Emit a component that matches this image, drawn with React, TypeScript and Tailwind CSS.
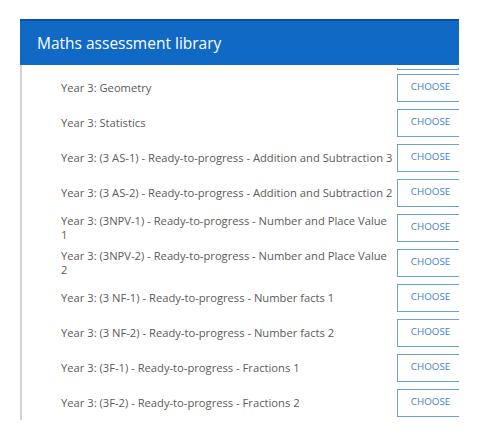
import React from "react";

const rows: string[] = [
  "Year 3: Geometry",
  "Year 3: Statistics",
  "Year 3: (3 AS-1) - Ready-to-progress - Addition and Subtraction 3",
  "Year 3: (3 AS-2) - Ready-to-progress - Addition and Subtraction 2",
  "Year 3: (3NPV-1) - Ready-to-progress - Number and Place Value 1",
  "Year 3: (3NPV-2) - Ready-to-progress - Number and Place Value 2",
  "Year 3: (3 NF-1) - Ready-to-progress - Number facts 1",
  "Year 3: (3 NF-2) - Ready-to-progress - Number facts 2",
  "Year 3: (3F-1) - Ready-to-progress - Fractions 1",
  "Year 3: (3F-2) - Ready-to-progress - Fractions 2",
];

export default function App() {
  return (
    <div
      className="w-[480px] h-[440px] bg-white overflow-hidden pt-[19px] pl-[20px]"
      style={{ fontFamily: '"Open Sans", "Noto Sans", sans-serif' }}
    >
      <div className="w-[439px] overflow-hidden">
        <div className="h-[46px] bg-[#1169c6] border-t-2 border-[#0c519f] flex items-center pl-[17px] pb-[1px]">
          <span className="text-white text-[15.5px] leading-[20px]">Maths assessment library</span>
        </div>
        <div className="relative h-[355px] border-l-2 border-[#d2d2d2] overflow-hidden">
          <div className="absolute left-[-2px] top-[51px] w-[2px] h-[19px] bg-[#1a66bf]" />
          <div className="absolute left-[-2px] top-[72px] w-[2px] h-[20px] bg-[#1a66bf]" />
          <div className="h-[5px] flex items-end">
            <div className="ml-[375px] w-[70px] h-[2px] border border-t-0 border-[#6c9fde]" />
          </div>
          <div className="flex flex-col">
            {rows.map((r, i) => (
              <div key={i} className="h-[35px] flex items-center shrink-0">
                <div className="w-[375px] shrink-0 pl-[39px] pr-[2px] text-[11.2px] leading-[14px] text-[#5b5b5b]">{r}</div>
                <button className="shrink-0 w-[70px] h-[28px] border border-[#6c9fde] bg-white text-[#3f80d0] text-[9.8px] flex items-center justify-center pr-[3px]">
                  CHOOSE
                </button>
              </div>
            ))}
          </div>
        </div>
      </div>
    </div>
  );
}
